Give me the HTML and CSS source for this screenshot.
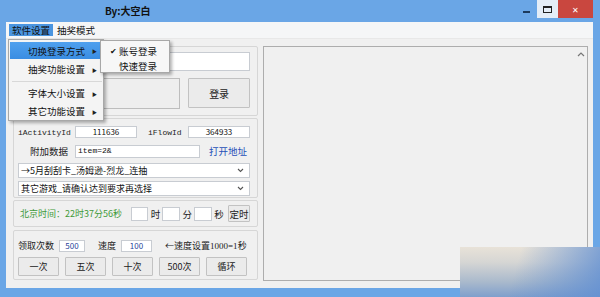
FILE: index.html
```html
<!DOCTYPE html>
<html lang="zh-CN">
<head>
    <meta charset="UTF-8">
    <title>By:大空白</title>
    <link rel="stylesheet" href="styles.css">
</head>
<body>
    <div class="window">
        <div class="titlebar">
            <div class="title">By:大空白</div>
            <div class="controls">
                <div class="ctl ctl-min"><span class="min-bar"></span></div>
                <div class="ctl ctl-max"><span class="max-box"></span></div>
                <div class="ctl ctl-close">✕</div>
            </div>
        </div>

        <div class="frame">
            <div class="menubar">
                <div class="menu-item active">软件设置</div>
                <div class="menu-item">抽奖模式</div>
            </div>

            <div class="client">
                <div class="left-col">
                    <div class="group group-login">
                        <div class="text-box account"></div>
                        <div class="login-row">
                            <div class="captcha"></div>
                            <button class="btn btn-login">登录</button>
                        </div>
                    </div>

                    <div class="group group-params">
                        <div class="row">
                            <span class="mono-label">iActivityId</span>
                            <div class="small-input w-id">111636</div>
                            <span class="mono-label flow">iFlowId</span>
                            <div class="small-input w-id">364933</div>
                        </div>
                        <div class="row">
                            <span class="label extra">附加数据</span>
                            <div class="small-input w-extra mono">item=2&amp;</div>
                            <span class="link">打开地址</span>
                        </div>
                        <div class="combo">
                            <span>→5月刮刮卡_汤姆逊-烈龙_连抽</span>
                            <svg class="chev" width="7" height="5" viewBox="0 0 7 5"><path d="M1 1 L3.5 3.5 L6 1" fill="none" stroke="#555" stroke-width="1.1"/></svg>
                        </div>
                        <div class="combo">
                            <span>其它游戏_请确认达到要求再选择</span>
                            <svg class="chev" width="7" height="5" viewBox="0 0 7 5"><path d="M1 1 L3.5 3.5 L6 1" fill="none" stroke="#555" stroke-width="1.1"/></svg>
                        </div>
                    </div>

                    <div class="group group-timer">
                        <span class="clock">北京时间：22时37分56秒</span>
                        <div class="small-input w-time"></div>
                        <span class="label">时</span>
                        <div class="small-input w-time"></div>
                        <span class="label">分</span>
                        <div class="small-input w-time"></div>
                        <span class="label">秒</span>
                        <button class="btn btn-timer">定时</button>
                    </div>

                    <div class="group group-run">
                        <div class="row">
                            <span class="label">领取次数</span>
                            <div class="small-input w-num blue">500</div>
                            <span class="label">速度</span>
                            <div class="small-input w-num blue">100</div>
                            <span class="label">←速度设置<span class="serif">1000=1</span>秒</span>
                        </div>
                        <div class="btn-row">
                            <button class="btn">一次</button>
                            <button class="btn">五次</button>
                            <button class="btn">十次</button>
                            <button class="btn">500次</button>
                            <button class="btn">循环</button>
                        </div>
                    </div>
                </div>

                <div class="log-panel">
                    <svg class="scroll-up" width="8" height="5" viewBox="0 0 8 5"><path d="M1 4 L4 1 L7 4" fill="none" stroke="#777" stroke-width="1.2"/></svg>
                </div>
            </div>
        </div>

        <!-- open menu -->
        <div class="dropdown">
            <div class="dd-item hot"><span>切换登录方式</span><span class="arrow">▶</span></div>
            <div class="dd-item"><span>抽奖功能设置</span><span class="arrow">▶</span></div>
            <div class="dd-sep"></div>
            <div class="dd-item short"><span>字体大小设置</span><span class="arrow">▶</span></div>
            <div class="dd-item short"><span>其它功能设置</span><span class="arrow">▶</span></div>
        </div>
        <div class="submenu">
            <div class="sub-item"><span class="check">✔</span>账号登录</div>
            <div class="sub-item"><span class="check"></span>快速登录</div>
        </div>

        <div class="watermark"></div>
    </div>
</body>
</html>
```

FILE: styles.css
```css
* {
    box-sizing: border-box;
}
body {
    margin: 0;
    font-family: "Noto Sans CJK SC", "Liberation Sans", sans-serif;
    font-size: 9px;
    color: #222;
}
.window {
    position: relative;
    width: 600px;
    height: 297px;
    background: #6aa6e6;
    display: flex;
    flex-direction: column;
    overflow: hidden;
}
.titlebar {
    height: 22px;
    display: flex;
    align-items: flex-start;
}
.title {
    margin-left: 105px;
    margin-top: 4px;
    font-size: 10px;
    font-weight: bold;
    color: #111;
    line-height: 14px;
}
.controls {
    margin-left: auto;
    margin-right: 7px;
    display: flex;
}
.ctl {
    height: 18px;
    display: flex;
    align-items: center;
    justify-content: center;
}
.ctl-min {
    width: 22px;
}
.min-bar {
    width: 7px;
    height: 2px;
    margin-top: 5px;
    background: #1d3a5c;
}
.ctl-max {
    width: 21px;
    background: #e4edf7;
}
.max-box {
    width: 9px;
    height: 7px;
    border: 1px solid #222;
    border-top-width: 2px;
}
.ctl-close {
    width: 35px;
    background: #c9473f;
    color: #fff;
    font-size: 8px;
}
.frame {
    flex: 1;
    margin: 0 7px 9px 6px;
    background: #f0f0f0;
    display: flex;
    flex-direction: column;
}
.menubar {
    height: 17px;
    background: #f5f6f7;
    display: flex;
    align-items: center;
    padding-left: 3px;
    border-bottom: 1px solid #e8e8e8;
}
.menu-item {
    height: 12px;
    line-height: 12px;
    padding: 0 3px;
    margin-right: 1px;
    font-size: 9.5px;
    color: #111;
}
.menu-item.active {
    background: #4a95e0;
    width: 44px;
}
.client {
    flex: 1;
    display: flex;
    padding: 7px 5px 7px 7px;
    gap: 5px;
}
.left-col {
    width: 245px;
    display: flex;
    flex-direction: column;
    gap: 2px;
}
.group {
    border: 1px solid #d6d6d6;
    border-radius: 2px;
    padding: 0 7px 0 4px;
}
.group-login {
    height: 70px;
    padding-top: 5px;
}
.text-box {
    background: #fff;
    border: 1px solid #c8ccd2;
}
.account {
    height: 19px;
    margin-left: 4px;
}
.login-row {
    display: flex;
    gap: 8px;
    margin-top: 7px;
}
.captcha {
    width: 163px;
    height: 31px;
    border: 1px solid #bdbdbd;
    background: #eeeeee;
}
.btn {
    font-family: inherit;
    font-size: 9px;
    color: #222;
    border: 1px solid #c2c2c2;
    background: #ebebeb;
    border-radius: 1px;
    padding: 0;
}
.btn-login {
    width: 62px;
    height: 30px;
    font-size: 10px;
}
.group-params {
    height: 80px;
    padding-top: 7px;
    display: flex;
    flex-direction: column;
}
.row {
    display: flex;
    align-items: center;
}
.mono-label {
    font-family: "Liberation Mono", monospace;
    font-size: 8px;
    width: 57px;
}
.mono-label.flow {
    width: 40px;
    margin-left: 11px;
}
.small-input {
    height: 12px;
    background: #fff;
    border: 1px solid #c8ccd2;
    font-size: 8px;
    line-height: 10px;
    text-align: center;
    color: #111;
}
.w-id {
    width: 62px;
}
.row + .row {
    margin-top: 6px;
}
.label {
    white-space: nowrap;
}
.label.extra {
    width: 57px;
    padding-left: 12px;
    font-size: 9.5px;
}
.w-extra {
    width: 125px;
    height: 13px;
    text-align: left;
    padding-left: 2px;
}
.mono {
    font-family: "Liberation Mono", monospace;
}
.link {
    margin-left: 9px;
    color: #1f4fb8;
    font-size: 9.5px;
}
.combo {
    height: 15px;
    margin-top: 5px;
    background: #fff;
    border: 1px solid #c8ccd2;
    display: flex;
    align-items: center;
    padding: 0 5px 0 2px;
    font-size: 9px;
    color: #111;
}
.combo + .combo {
    margin-top: 3px;
}
.chev {
    margin-left: auto;
}
.group-timer {
    height: 27px;
    display: flex;
    align-items: center;
    padding-left: 6px;
}
.clock {
    color: #3f9a3a;
    width: 111px;
    white-space: nowrap;
}
.w-time {
    width: 18px;
    height: 14px;
}
.group-timer .label {
    width: 14px;
    text-align: center;
    font-size: 9.5px;
}
.btn-timer {
    width: 22px;
    height: 17px;
    margin-left: 2px;
    font-size: 9.5px;
}
.group-run {
    height: 50px;
    margin-top: 1px;
    padding-top: 8px;
    padding-left: 4px;
}
.group-run .row {
    gap: 5px;
}
.w-num {
    width: 26px;
}
.group-run .w-num + .label {
    margin-left: 8px;
}
.w-num:nth-of-type(2) {
    width: 31px;
}
.blue {
    color: #2a3f9a;
}
.serif {
    font-family: "Liberation Serif", serif;
}
.btn-row {
    display: flex;
    gap: 6px;
    margin-top: 5px;
}
.btn-row .btn {
    width: 41px;
    height: 19px;
}
.log-panel {
    flex: 1;
    position: relative;
    border: 1px solid #adadad;
    background: #f0f0f0;
}
.scroll-up {
    position: absolute;
    right: 2px;
    top: 5px;
}
.dropdown {
    position: absolute;
    left: 8px;
    top: 39px;
    width: 96px;
    height: 82px;
    background: #f4f4f4;
    border: 1px solid #a8a8a8;
    box-shadow: 2px 2px 3px rgba(0, 0, 0, 0.3);
    padding: 2px 1px;
}
.dd-item {
    height: 20px;
    display: flex;
    align-items: center;
    padding-left: 18px;
    padding-right: 5px;
    font-size: 9.5px;
    color: #111;
}
.dd-item.short {
    height: 18px;
}
.dd-item.hot {
    background: linear-gradient(#4fa0ee, #3a8de2);
    height: 17px;
}
.arrow {
    margin-left: auto;
    font-size: 5px;
    color: #222;
}
.dd-sep {
    height: 1px;
    margin: 2px 0 2px 2px;
    background: #d8d8d8;
}
.submenu {
    position: absolute;
    left: 100px;
    top: 40px;
    width: 70px;
    height: 33px;
    background: #f7f7f7;
    border: 1px solid #a8a8a8;
    box-shadow: 2px 2px 3px rgba(0, 0, 0, 0.3);
    padding-top: 2px;
}
.sub-item {
    height: 15px;
    display: flex;
    align-items: center;
    font-size: 9.5px;
    color: #111;
}
.check {
    width: 18px;
    text-align: right;
    padding-right: 2px;
    font-size: 8px;
}
.watermark {
    position: absolute;
    left: 460px;
    top: 247px;
    width: 140px;
    height: 50px;
    background:
        linear-gradient(105deg, rgba(230, 224, 214, 0) 40%, rgba(100, 145, 210, 0.9) 100%),
        linear-gradient(180deg, #e8e2d8 0%, #d6d6d4 30%, #a9b9cc 70%, #7f9fcc 100%);
}
```
